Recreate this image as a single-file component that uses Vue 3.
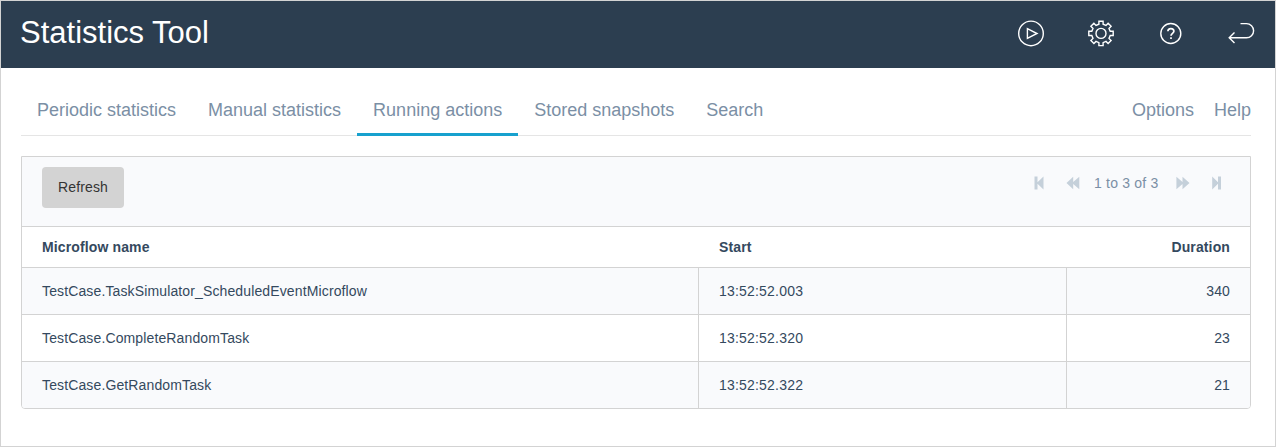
<script setup>
const tabs = ['Periodic statistics', 'Manual statistics', 'Running actions', 'Stored snapshots', 'Search']
const active = 'Running actions'
const rows = [
  { name: 'TestCase.TaskSimulator_ScheduledEventMicroflow', start: '13:52:52.003', duration: 340 },
  { name: 'TestCase.CompleteRandomTask', start: '13:52:52.320', duration: 23 },
  { name: 'TestCase.GetRandomTask', start: '13:52:52.322', duration: 21 },
]
</script>

<template>
  <div class="window">
    <header class="topbar">
      <h1>Statistics Tool</h1>
      <div class="actions">
        <svg width="28" height="28" viewBox="0 0 28 28"><circle cx="14" cy="14.400" r="12.300" /><path d="M10.400 9.700v9.600L20 14.500z" /></svg>
        <svg width="28" height="28" viewBox="0 0 28 28">
          <g transform="translate(0 .4)">
            <path d="M11.9 4.8V1.8h4.2v3l2.900 1.200 2.100-2.100 3 3L22 9l1.200 2.900h3v4.200h-3L22 19l2.100 2.100-3 3L19 22l-2.900 1.200v3h-4.200v-3L9 22l-2.100 2.100-3-3L6 19l-1.200-2.900h-3v-4.200h3L6 9 3.900 6.900l3-3L9 6z" />
            <circle cx="14" cy="14" r="5" />
          </g>
        </svg>
        <svg width="28" height="28" viewBox="0 0 28 28"><circle cx="13.800" cy="14.500" r="10" /><path class="bold" d="M10.900 12.300c0-3.600 6-3.600 6 0 0 2-2.900 2.100-2.900 4.400M14 18.300v1.800" /></svg>
        <svg width="28" height="28" viewBox="0 0 28 28"><path d="M13.500 4.600h6a7 7 0 0 1 0 14.200H2.500M7.500 13.600L2.200 18.800l5.300 5.300" /></svg>
      </div>
    </header>
    <main>
      <nav>
        <a v-for="t in tabs" :key="t" class="tab" :class="{ active: t === active }">{{ t }}</a>
        <div class="links"><a>Options</a><a>Help</a></div>
      </nav>
      <section class="grid">
        <div class="toolbar">
          <button>Refresh</button>
          <div class="paging">
            <svg width="10" height="14" viewBox="0 0 10 14"><path d="M.5 .5h3v5.700L9.500 .5v13L3.500 7.800v5.700h-3z" /></svg>
            <svg class="rewind" width="14" height="14" viewBox="0 0 14 14"><path d="M.5 7L7.200 .7v5.200L13.300 .7v12.600L7.200 8.100v5.200z" /></svg>
            <span>1 to 3 of 3</span>
            <svg class="forward" width="14" height="14" viewBox="0 0 14 14"><path d="M13.500 7L6.500 .7v5.200L.4 .7v12.600L6.500 8.100v5.200z" /></svg>
            <svg width="10" height="14" viewBox="0 0 10 14"><path d="M9 .5H6v5.700L.2 .5v13L6 7.800v5.700h3z" /></svg>
          </div>
        </div>
        <div class="row head"><div>Microflow name</div><div>Start</div><div>Duration</div></div>
        <div v-for="r in rows" :key="r.name" class="row">
          <div>{{ r.name }}</div><div class="time">{{ r.start }}</div><div>{{ r.duration }}</div>
        </div>
      </section>
    </main>
  </div>
</template>

<style>
body { margin: 0; background: #fff; }
</style>

<style scoped>
* { box-sizing: border-box; }
.window {
  height: 447px;
  border: 1px solid #d3d3d3;
  background: #fff;
  font: 14px/20px "Liberation Sans", Arial, sans-serif;
  color: #34495e;
}
.topbar {
  height: 67px;
  padding: 0 20px 3px 19px;
  display: flex;
  align-items: center;
  justify-content: space-between;
  background: #2c3e50;
}
h1 { margin: 0; font-size: 31px; line-height: 36px; font-weight: 400; color: #fff; }
.actions { display: flex; gap: 42px; }
.actions svg { display: block; fill: none; stroke: #fff; stroke-width: 1.4; }
.actions .bold { stroke-width: 1.7; }
main { padding: 17px 24px 0 20px; }
nav {
  height: 51px;
  display: flex;
  border-bottom: 1px solid #e5e5e5;
  font-size: 18px;
  line-height: 24px;
  color: #7b8fa5;
}
.tab { height: 51px; padding: 13px 16px 0; }
.tab.active { border-bottom: 3px solid #17a1ce; }
.links { margin-left: auto; display: flex; gap: 20px; padding-top: 13px; }
.grid { margin-top: 20px; border: 1px solid #d3d3d3; border-radius: 0 0 4px 4px; overflow: hidden; }
.toolbar {
  height: 69px;
  padding: 10px 28px 0 20px;
  display: flex;
  align-items: flex-start;
  justify-content: space-between;
  background: #f9fafc;
}
button {
  width: 82px;
  height: 41px;
  padding: 0 0 2px;
  border: 0;
  border-radius: 4px;
  background: #d3d3d3;
  color: #333;
  font: inherit;
  letter-spacing: 0.15px;
}
.paging { display: flex; align-items: center; padding-top: 6px; color: #7b8fa5; }
.paging svg { fill: #c5d0da; }
.rewind { margin-left: 22px; }
.paging span { margin-left: 14px; width: 64px; white-space: nowrap; letter-spacing: 0.2px; }
.forward { margin: 0 22px 0 18px; }
.row { display: grid; grid-template-columns: 676px 368px 1fr; height: 47px; border-top: 1px solid #d3d3d3; }
.row > div { padding: 13px 20px 0; letter-spacing: 0.13px; }
.row > .time { letter-spacing: 0.2px; }
.row > div + div { border-left: 1px solid #d3d3d3; }
.row > div:last-child { text-align: right; }
.row:nth-child(odd) { background: #f9fafc; }
.row.head { height: 41px; font-weight: 700; }
.row.head > div { padding-top: 10px; }
.row.head > div + div { border-color: transparent; }
</style>
